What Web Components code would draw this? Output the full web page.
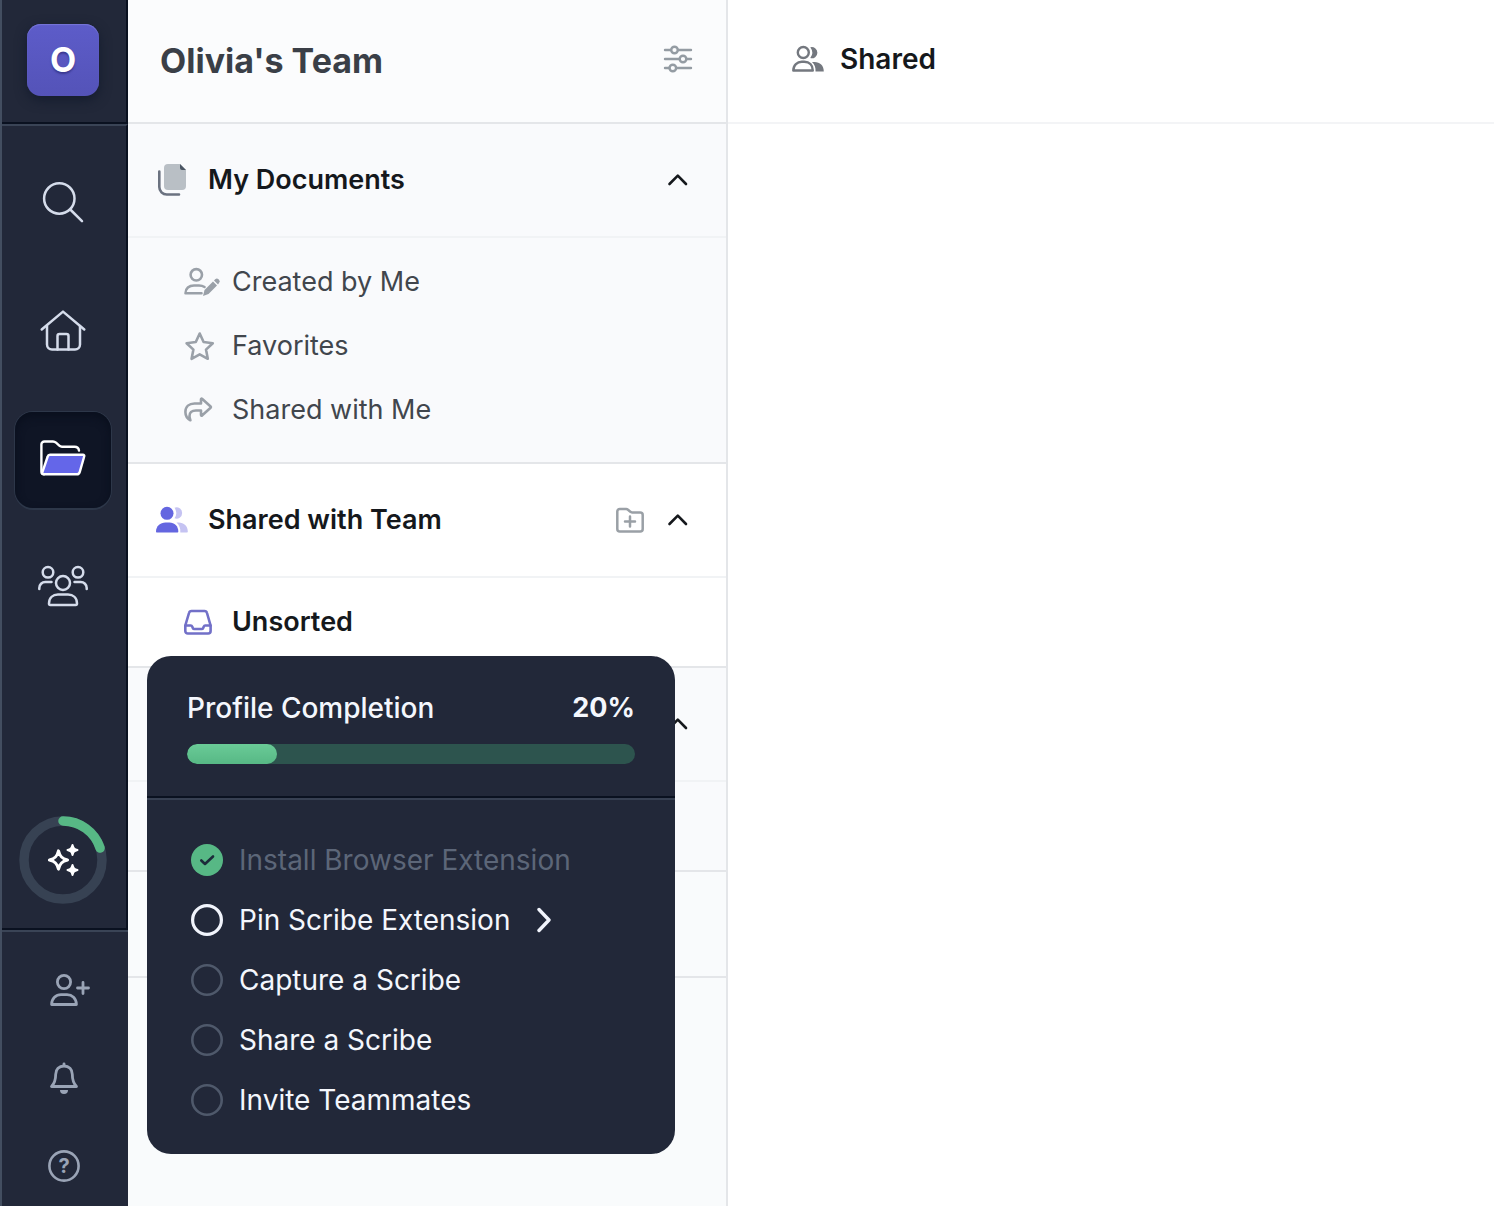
<!DOCTYPE html>
<html lang="en">
<head>
<meta charset="utf-8">
<meta name="viewport" content="width=device-width, initial-scale=1">
<title>Olivia's Team</title>
<style>
  body {
    margin: 0;
    background: #fff;
    color: #15181c;
    font-family: Inter, "Liberation Sans", sans-serif;
    font-size: 28px;
    line-height: 40px;
  }
</style>
</head>
<body>
<team-app>
  <nav-rail slot="rail"></nav-rail>

  <team-sidebar slot="sidebar" heading="Olivia's Team">
    <nav-section icon="docs" label="My Documents">
      <nav-row icon="userPen">Created by Me</nav-row>
      <nav-row icon="star">Favorites</nav-row>
      <nav-row icon="share">Shared with Me</nav-row>
    </nav-section>
    <nav-section class="team" icon="usersSolid" label="Shared with Team" addable>
      <nav-row icon="inbox" current>Unsorted</nav-row>
    </nav-section>
    <nav-section></nav-section>
  </team-sidebar>

  <page-header slot="main" icon="users">Shared</page-header>

  <profile-card slot="overlay" label="Profile Completion" value="20">
    <task-item state="done">Install Browser Extension</task-item>
    <task-item state="next">Pin Scribe Extension</task-item>
    <task-item>Capture a Scribe</task-item>
    <task-item>Share a Scribe</task-item>
    <task-item>Invite Teammates</task-item>
  </profile-card>
</team-app>

<script>
// name: [width, height, stroke width, markup]
const ICONS = {
  search: [48, 48, 2.5, `<circle cx="20.3" cy="18.5" r="15.2"/><path d="M31.3 29.5 43 41.2"/>`],
  home: [48, 48, 2.5, `<path d="M2.7 21.5 24 3.6l21.3 17.9"/><path d="M8 18v18.5a5 5 0 0 0 5 5h23a5 5 0 0 0 5-5V18"/><path d="M18.5 41.5V28a2 2 0 0 1 2-2h7a2 2 0 0 1 2 2v13.5"/>`],
  folder: [48, 48, 2.4, `<path d="M5 38.4a3 3 0 0 1-2.6-3V8.500a3 3 0 0 1 3-3h8.600c1.200 0 2.200.5 3 1.200l3.300 3c.8.7 1.700 1.100 2.700 1.100h12.500c2.500 0 4.200 1.500 4.500 3.800"/><path fill="#6466e9" d="M11 18.800h33c.9 0 1.500.8 1.200 1.700l-4.500 15.600a3 3 0 0 1-2.900 2.200H5c-1.500 0-2-.9-1.600-2.200l5.300-15.600c.3-1.100 1.200-1.700 2.300-1.700z"/>`],
  people: [52, 52, 2.5, `<circle cx="11" cy="10.300" r="5.300"/><circle cx="41" cy="10.300" r="5.300"/><circle cx="26" cy="21" r="7"/><path d="M2.300 27v-1a6 6 0 0 1 6-6h6.200M49.700 27v-1a6 6 0 0 0-6-6h-6.200"/><path d="M12 41.500c0-5.800 4-9 9-9h10c5 0 9 3.200 9 9 0 .9-.5 1.400-1.300 1.400H13.300c-.8 0-1.300-.5-1.300-1.400z"/>`],
  sparkles: [36, 36, 3.2, `<path d="M13.500 9c1.300 5.500 3.500 7.700 9 9-5.500 1.300-7.700 3.500-9 9-1.300-5.500-3.500-7.700-9-9 5.500-1.300 7.700-3.500 9-9z"/><path fill="currentColor" stroke-width="2" d="M27.500 3c.9 3.300 1.700 4.100 5 5-3.300.9-4.100 1.700-5 5-.9-3.300-1.700-4.100-5-5 3.300-.9 4.100-1.700 5-5zM27.500 23c.9 3.300 1.700 4.100 5 5-3.300.9-4.100 1.700-5 5-.9-3.300-1.700-4.100-5-5 3.300-.9 4.100-1.700 5-5z"/>`],
  userPlus: [32, 32, 2.8, `<circle cx="16" cy="8" r="6.600"/><path d="M3.600 30.500c0-6 4.400-9.800 9.400-9.800h6c5 0 9.400 3.800 9.400 9.800z"/><path d="M35 8.500v11M29.500 14h11"/>`],
  bell: [32, 32, 2.8, `<path d="M16 1.800v2"/><path d="M16 4c-5 0-8.300 3.500-8.300 8.300 0 6-1 9-4.200 12.200h25c-3.200-3.200-4.200-6.200-4.200-12.200C24.300 7.500 21 4 16 4z"/><path fill="currentColor" stroke="none" d="M12 28h8a4 4 0 0 1-8 0z"/>`],
  help: [32, 32, 2.6, `<circle cx="16" cy="16" r="14.600"/><text x="16" y="23" text-anchor="middle" font-family="Inter, sans-serif" font-size="20" font-weight="700" fill="currentColor" stroke="none">?</text>`],
  sliders: [28, 28, 2.4, `<path d="M1 3h6M14 3h13M1 12h14.500M22.500 12h4.500M1 21h4.300M12.300 21H27"/><circle cx="10.500" cy="3" r="3.300"/><circle cx="19" cy="12" r="3.300"/><circle cx="8.800" cy="21" r="3.300"/>`],
  docs: [32, 32, 2.6, `<path fill="#b9bfc5" stroke="none" d="M12 0h12l6 6v16a4 4 0 0 1-4 4H12a4 4 0 0 1-4-4V4a4 4 0 0 1 4-4z"/><path fill="#4b5563" stroke="none" d="M24 0l6 6h-4a2 2 0 0 1-2-2z"/><path d="M3.300 7.500V23a7.500 7.500 0 0 0 7.500 7.500H23"/>`],
  userPen: [36, 32, 2.6, `<circle cx="12.300" cy="8.800" r="5.700"/><path d="M20.500 21c-1.500-1-3.500-1.500-5.500-1.500h-5c-5 0-8.500 3-8.500 7.700h16"/><path fill="currentColor" stroke="none" d="M19 30l1.500-6 8.500-8.500 4 4-8.500 8.500zM30 14.500l1.200-1.200a2.300 2.300 0 0 1 3.300 0l.5.5a2.300 2.300 0 0 1 0 3.300L34 18.500z"/>`],
  star: [36, 32, 2.6, `<path d="M15.700 3.500l3.900 8.500 9.200 1.200-6.800 6.400 1.800 9.200-8.100-4.500-8.100 4.500 1.800-9.200-6.800-6.400 9.200-1.200z"/>`],
  share: [36, 32, 2.6, `<path d="M17 9.500V5.200c0-.6.600-.8 1-.4l8.600 7.700c.4.400.4.900 0 1.300L18 21.500c-.4.400-1 .2-1-.4v-4.600h-5c-4.500 0-6.500 2-6.500 5.500 0 1.800.5 3 .9 4.300-3-1.600-5-4.500-5-8.300 0-5.300 3.800-8.500 9.100-8.500z"/>`],
  usersSolid: [32, 32, 0, `<g fill="#c5c3f2"><path d="M18.500 3.800a5.600 5.600 0 1 1 0 10.400 9 9 0 0 0 0-10.400z"/><path d="M20.500 18.500h2c5.500 0 9.300 3.500 9.300 9 0 .6-.4 1-1 1h-6.500c.4-4-1-7.500-3.800-10z"/></g><g fill="#6466e0"><circle cx="11" cy="9.300" r="6.500"/><path d="M9.500 18.500h4c5 0 8.800 3.800 8.800 9 0 .6-.4 1-1 1H1c-.6 0-1-.4-1-1 0-5.200 4.300-9 9.500-9z"/></g>`],
  users: [32, 32, 2.4, `<circle cx="11.300" cy="9.500" r="5.500"/><path d="M1.300 27.500c0-5.500 4-8.700 8.500-8.700h2.500c5 0 8.500 3.200 8.500 8.700z"/><g fill="currentColor" stroke="none"><path d="M18.300 4.300a5.600 5.600 0 1 1 0 10.800 9 9 0 0 0 0-10.800z"/><path d="M20 19h2.500c5.500 0 9.300 3.500 9.300 9.500h-8.300c.3-4-.8-7-3.500-9.500z"/></g>`],
  inbox: [36, 32, 2.6, `<path d="M7.500 5h13c1.300 0 2.200.7 2.500 2l3.600 12.500V25a2.500 2.500 0 0 1-2.500 2.500H3.800A2.500 2.500 0 0 1 1.300 25v-5.500L5 7c.3-1.300 1.200-2 2.500-2z"/><path d="M1.500 19.500h5.300c.8 0 1.200.5 1.500 1.200l.5 1.200c.3.700.8 1.100 1.500 1.100h7.400c.7 0 1.200-.4 1.500-1.100l.5-1.200c.3-.7.7-1.200 1.500-1.200h5.300"/>`],
  folderPlus: [28, 28, 2.5, `<path d="M3.800 3h6.400c.7 0 1.300.3 1.800.7l2.300 2c.5.500 1.100.7 1.800.7h8.100a2.500 2.500 0 0 1 2.500 2.500v14a2.500 2.500 0 0 1-2.500 2.500H3.800a2.500 2.500 0 0 1-2.500-2.500V5.500A2.500 2.500 0 0 1 3.800 3z"/><path d="M14 10.500v10M9 15.500h10"/>`],
  chevronUp: [28, 28, 2.6, `<path d="M5.500 18l8.300-8.300L22 18"/>`],
  chevronRight: [24, 32, 3.4, `<path d="M7 5.500 17 16 7 26.500"/>`],
  circle: [32, 32, 2.6, `<circle cx="16" cy="16" r="14.700"/>`],
  circleBold: [32, 32, 3.2, `<circle cx="16" cy="16" r="14.400"/>`],
  check: [32, 32, 2.6, `<circle cx="16" cy="16" r="16" fill="#57b885" stroke="none"/><path stroke="#1c2b3a" d="M10.300 16.500l3.700 3.500 8-7.500"/>`]
};

const icon = (name) => `<ui-icon name="${name}"></ui-icon>`;

class UiIcon extends HTMLElement {
  connectedCallback() {
    const [w, h, stroke, markup] = ICONS[this.getAttribute("name")];
    this.attachShadow({ mode: "open" }).innerHTML = /*html*/ `
      <style>
        :host { display: block; flex: none; }
        svg { display: block; overflow: visible; }
      </style>
      <svg width="${w}" height="${h}" viewBox="0 0 ${w} ${h}" fill="none" stroke="currentColor"
        stroke-width="${stroke}" stroke-linecap="round" stroke-linejoin="round" aria-hidden="true">${markup}</svg>`;
  }
}

class TeamApp extends HTMLElement {
  constructor() {
    super();
    this.attachShadow({ mode: "open" }).innerHTML = /*html*/ `
      <style>
        :host {
          display: grid;
          grid-template-columns: 128px minmax(320px, 600px) minmax(0, 1fr);
          min-height: 100vh;
        }
      </style>
      <slot name="rail"></slot>
      <slot name="sidebar"></slot>
      <main><slot name="main"></slot></main>
      <slot name="overlay"></slot>`;
  }
}

class NavRail extends HTMLElement {
  constructor() {
    super();
    this.attachShadow({ mode: "open" }).innerHTML = /*html*/ `
      <style>
        :host {
          display: flex;
          flex-direction: column;
          box-sizing: border-box;
          border-left: 2px solid #434e60;
          background: #222839;
          color: #d5dceb;
        }
        button {
          display: grid;
          place-items: center;
          padding: 0;
          border: 0;
          background: none;
          color: inherit;
          font: inherit;
          cursor: pointer;
        }
        .brand, nav, .progress {
          display: flex;
          flex-direction: column;
          align-items: center;
          border-right: 2px solid #0a1120;
          padding-right: 2px;
        }
        .brand {
          padding-top: 24px;
          padding-bottom: 26px;
          border-bottom: 2px solid #0a1120;
        }
        .logo {
          width: 72px;
          height: 72px;
          border-radius: 14px;
          background: linear-gradient(#5d5cc9, #5453b8);
          box-shadow: inset 0 1px 1px #7776d8, 0 4px 12px #141c2e;
          color: #fff;
          font-size: 34px;
          font-weight: 700;
          text-shadow: 0 2px 2px #3a3990;
        }
        nav {
          flex: 1;
          gap: 32px;
          padding-top: 30px;
          border-top: 2px solid #3a4456;
        }
        nav button {
          width: 96px;
          height: 96px;
          border-radius: 18px;
        }
        nav [aria-current] {
          background: #0f1525;
          box-shadow: inset 0 4px 8px #090f1d, 0 0 0 1px #2d3749, 0 2px 0 #2d3749;
          color: #fff;
        }
        .progress {
          padding-bottom: 24px;
          border-bottom: 2px solid #0a1120;
        }
        .ring {
          width: 88px;
          height: 88px;
          color: #fff;
        }
        .ring > * { grid-area: 1 / 1; }
        .tools {
          display: flex;
          flex-direction: column;
          align-items: center;
          gap: 56px;
          padding: 42px 2px 24px 0;
          border-top: 2px solid #3a4456;
          color: #9aa4b6;
        }
      </style>
      <div class="brand"><button class="logo">O</button></div>
      <nav aria-label="Main">
        <button aria-label="Search">${icon("search")}</button>
        <button aria-label="Home">${icon("home")}</button>
        <button aria-label="Documents" aria-current="page">${icon("folder")}</button>
        <button aria-label="Team">${icon("people")}</button>
      </nav>
      <div class="progress">
        <button class="ring" aria-label="Profile completion">
          <svg width="88" height="88" fill="none" stroke-width="9.500" stroke-linecap="round" aria-hidden="true">
            <circle cx="44" cy="44" r="39" stroke="#374253"/>
            <path d="M44 5A39 39 0 0 1 81.100 32" stroke="#57b885"/>
          </svg>
          ${icon("sparkles")}
        </button>
      </div>
      <div class="tools">
        <button aria-label="Invite">${icon("userPlus")}</button>
        <button aria-label="Notifications">${icon("bell")}</button>
        <button aria-label="Help">${icon("help")}</button>
      </div>`;
  }
}

class TeamSidebar extends HTMLElement {
  connectedCallback() {
    this.attachShadow({ mode: "open" }).innerHTML = /*html*/ `
      <style>
        :host {
          display: block;
          border-right: 2px solid #e4e6e9;
          background: #f9fbfc;
        }
        header {
          display: flex;
          align-items: center;
          justify-content: space-between;
          min-height: 122px;
          padding: 0 34px 0 32px;
          border-bottom: 2px solid #e4e6e9;
          background: #fbfcfd;
        }
        h1 {
          margin: 0;
          color: #3a3f47;
          font-size: 34px;
          font-weight: 700;
          line-height: 48px;
        }
        button {
          padding: 0;
          border: 0;
          background: none;
          color: #949ca3;
          cursor: pointer;
        }
        .rest {
          height: 104px;
          border-bottom: 2px solid #e4e6e9;
        }
      </style>
      <header>
        <h1>${this.getAttribute("heading")}</h1>
        <button aria-label="View options">${icon("sliders")}</button>
      </header>
      <slot></slot>
      <div class="rest"></div>`;
  }
}

class NavSection extends HTMLElement {
  connectedCallback() {
    const label = this.getAttribute("label") || "";
    const name = this.getAttribute("icon");
    const add = this.hasAttribute("addable");
    this.attachShadow({ mode: "open" }).innerHTML = /*html*/ `
      <style>
        :host {
          display: block;
          border-bottom: 2px solid #e4e6e9;
          background: #f9fafc;
        }
        :host(.team) { background: #fff; }
        header {
          display: flex;
          align-items: center;
          gap: 20px;
          min-height: 112px;
          padding: 0 34px 0 28px;
          border-bottom: 2px solid #f1f3f5;
          color: #6b7280;
        }
        h2 {
          flex: 1;
          margin: 0;
          color: #15181c;
          font-size: 27px;
          font-weight: 600;
        }
        button {
          padding: 0;
          border: 0;
          background: none;
          color: #15181c;
          cursor: pointer;
        }
        .add { color: #9aa0a6; }
        .rows {
          min-height: 64px;
          padding: 12px 0;
        }
        :host(:first-child) .rows { padding-bottom: 20px; }
      </style>
      <header>
        ${name ? icon(name) : ""}
        <h2>${label}</h2>
        ${add ? `<button class="add" aria-label="New folder">${icon("folderPlus")}</button>` : ""}
        <button class="toggle" aria-label="Collapse ${label}" aria-expanded="true">${icon("chevronUp")}</button>
      </header>
      <div class="rows"><slot></slot></div>`;

    const toggle = this.shadowRoot.querySelector(".toggle");
    const rows = this.shadowRoot.querySelector(".rows");
    toggle.addEventListener("click", () => {
      rows.hidden = !rows.hidden;
      toggle.setAttribute("aria-expanded", String(!rows.hidden));
    });
  }
}

class NavRow extends HTMLElement {
  connectedCallback() {
    this.attachShadow({ mode: "open" }).innerHTML = /*html*/ `
      <style>
        :host { display: block; }
        a {
          display: flex;
          align-items: center;
          gap: 12px;
          min-height: 64px;
          padding: 0 36px 0 56px;
          color: #41464d;
          font-size: 27px;
          text-decoration: none;
        }
        ui-icon { color: #9aa0a8; }
        :host([current]) a { color: #15181c; font-weight: 600; }
        :host([current]) ui-icon { color: #7270c8; }
      </style>
      <a href="#">${icon(this.getAttribute("icon"))}<span><slot></slot></span></a>`;
  }
}

class PageHeader extends HTMLElement {
  connectedCallback() {
    this.attachShadow({ mode: "open" }).innerHTML = /*html*/ `
      <style>
        :host {
          display: flex;
          align-items: center;
          gap: 16px;
          box-sizing: border-box;
          min-height: 124px;
          padding: 0 64px 4px;
          border-bottom: 2px solid #f3f4f6;
        }
        ui-icon { color: #74787f; }
        h2 {
          margin: 0;
          font-size: 28px;
          font-weight: 600;
        }
      </style>
      ${icon(this.getAttribute("icon"))}
      <h2><slot></slot></h2>`;
  }
}

class ProfileCard extends HTMLElement {
  connectedCallback() {
    const value = this.getAttribute("value");
    this.attachShadow({ mode: "open" }).innerHTML = /*html*/ `
      <style>
        :host {
          position: fixed;
          left: 147px;
          bottom: 52px;
          width: 528px;
          border-radius: 24px;
          background: #222839;
          color: #f4f7fd;
        }
        header {
          display: grid;
          grid-template-columns: 1fr auto;
          row-gap: 16px;
          padding: 32px 40px;
          border-bottom: 2px solid #0a1120;
        }
        label { font-weight: 500; }
        strong {
          font-size: 27px;
          font-weight: 700;
        }
        progress {
          grid-column: 1 / -1;
          display: block;
          width: 100%;
          height: 20px;
          border: 0;
          border-radius: 10px;
          overflow: hidden;
          appearance: none;
          background: #2d544e;
        }
        progress::-webkit-progress-bar { background: #2d544e; }
        progress::-webkit-progress-value {
          border-radius: 10px;
          background: linear-gradient(#6acb97, #57b885);
        }
        .tasks {
          padding: 30px 44px 24px;
          border-top: 2px solid #374052;
        }
      </style>
      <header>
        <label for="bar">${this.getAttribute("label")}</label>
        <strong>${value}%</strong>
        <progress id="bar" max="100" value="${value}"></progress>
      </header>
      <div class="tasks"><slot></slot></div>`;
  }
}

class TaskItem extends HTMLElement {
  connectedCallback() {
    const state = this.getAttribute("state");
    const mark = { done: "check", next: "circleBold" }[state] || "circle";
    this.attachShadow({ mode: "open" }).innerHTML = /*html*/ `
      <style>
        :host { display: block; }
        button {
          display: flex;
          align-items: center;
          gap: 16px;
          height: 60px;
          padding: 0;
          border: 0;
          background: none;
          color: inherit;
          font: inherit;
          cursor: pointer;
        }
        span { padding-right: 6px; }
        ui-icon { color: #4f596b; }
        :host([state="done"]) { color: #5c6678; }
        :host([state="next"]) ui-icon { color: #f1f4fc; }
      </style>
      <button>
        ${icon(mark)}
        <span><slot></slot></span>
        ${state === "next" ? icon("chevronRight") : ""}
      </button>`;
  }
}

customElements.define("ui-icon", UiIcon);
customElements.define("team-app", TeamApp);
customElements.define("nav-rail", NavRail);
customElements.define("team-sidebar", TeamSidebar);
customElements.define("nav-section", NavSection);
customElements.define("nav-row", NavRow);
customElements.define("page-header", PageHeader);
customElements.define("profile-card", ProfileCard);
customElements.define("task-item", TaskItem);
</script>
</body>
</html>
